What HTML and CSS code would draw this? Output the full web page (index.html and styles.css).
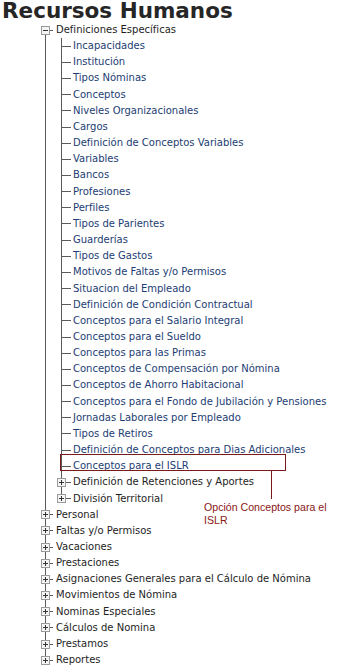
FILE: index.html
```html
<!DOCTYPE html>
<html lang="es">
<head>
<meta charset="utf-8">
<title>Recursos Humanos</title>
<link rel="stylesheet" href="styles.css">
</head>
<body>
<div class="page">
  <h1 class="title">Recursos Humanos</h1>
  <div class="tree">
    <div class="row folder"><span class="conn c1 first"><span class="box minus"></span></span><span class="label">Definiciones Específicas</span></div>

    <div class="row leaf"><span class="ind v"></span><span class="conn c2 mid"></span><span class="label">Incapacidades</span></div>
    <div class="row leaf"><span class="ind v"></span><span class="conn c2 mid"></span><span class="label">Institución</span></div>
    <div class="row leaf"><span class="ind v"></span><span class="conn c2 mid"></span><span class="label">Tipos Nóminas</span></div>
    <div class="row leaf"><span class="ind v"></span><span class="conn c2 mid"></span><span class="label">Conceptos</span></div>
    <div class="row leaf"><span class="ind v"></span><span class="conn c2 mid"></span><span class="label">Niveles Organizacionales</span></div>
    <div class="row leaf"><span class="ind v"></span><span class="conn c2 mid"></span><span class="label">Cargos</span></div>
    <div class="row leaf"><span class="ind v"></span><span class="conn c2 mid"></span><span class="label">Definición de Conceptos Variables</span></div>
    <div class="row leaf"><span class="ind v"></span><span class="conn c2 mid"></span><span class="label">Variables</span></div>
    <div class="row leaf"><span class="ind v"></span><span class="conn c2 mid"></span><span class="label">Bancos</span></div>
    <div class="row leaf"><span class="ind v"></span><span class="conn c2 mid"></span><span class="label">Profesiones</span></div>
    <div class="row leaf"><span class="ind v"></span><span class="conn c2 mid"></span><span class="label">Perfiles</span></div>
    <div class="row leaf"><span class="ind v"></span><span class="conn c2 mid"></span><span class="label">Tipos de Parientes</span></div>
    <div class="row leaf"><span class="ind v"></span><span class="conn c2 mid"></span><span class="label">Guarderías</span></div>
    <div class="row leaf"><span class="ind v"></span><span class="conn c2 mid"></span><span class="label">Tipos de Gastos</span></div>
    <div class="row leaf"><span class="ind v"></span><span class="conn c2 mid"></span><span class="label">Motivos de Faltas y/o Permisos</span></div>
    <div class="row leaf"><span class="ind v"></span><span class="conn c2 mid"></span><span class="label">Situacion del Empleado</span></div>
    <div class="row leaf"><span class="ind v"></span><span class="conn c2 mid"></span><span class="label">Definición de Condición Contractual</span></div>
    <div class="row leaf"><span class="ind v"></span><span class="conn c2 mid"></span><span class="label">Conceptos para el Salario Integral</span></div>
    <div class="row leaf"><span class="ind v"></span><span class="conn c2 mid"></span><span class="label">Conceptos para el Sueldo</span></div>
    <div class="row leaf"><span class="ind v"></span><span class="conn c2 mid"></span><span class="label">Conceptos para las Primas</span></div>
    <div class="row leaf"><span class="ind v"></span><span class="conn c2 mid"></span><span class="label">Conceptos de Compensación por Nómina</span></div>
    <div class="row leaf"><span class="ind v"></span><span class="conn c2 mid"></span><span class="label">Conceptos de Ahorro Habitacional</span></div>
    <div class="row leaf"><span class="ind v"></span><span class="conn c2 mid"></span><span class="label">Conceptos para el Fondo de Jubilación y Pensiones</span></div>
    <div class="row leaf"><span class="ind v"></span><span class="conn c2 mid"></span><span class="label">Jornadas Laborales por Empleado</span></div>
    <div class="row leaf"><span class="ind v"></span><span class="conn c2 mid"></span><span class="label">Tipos de Retiros</span></div>
    <div class="row leaf"><span class="ind v"></span><span class="conn c2 mid"></span><span class="label">Definición de Conceptos para Dias Adicionales</span></div>
    <div class="row leaf"><span class="ind v"></span><span class="conn c2 mid"></span><span class="label">Conceptos para el ISLR</span></div>
    <div class="row folder"><span class="ind v"></span><span class="conn c2 mid"><span class="box plus"></span></span><span class="label">Definición de Retenciones y Aportes</span></div>
    <div class="row folder"><span class="ind v"></span><span class="conn c2 last"><span class="box plus"></span></span><span class="label">División Territorial</span></div>

    <div class="row folder"><span class="conn c1 mid"><span class="box plus"></span></span><span class="label">Personal</span></div>
    <div class="row folder"><span class="conn c1 mid"><span class="box plus"></span></span><span class="label">Faltas y/o Permisos</span></div>
    <div class="row folder"><span class="conn c1 mid"><span class="box plus"></span></span><span class="label">Vacaciones</span></div>
    <div class="row folder"><span class="conn c1 mid"><span class="box plus"></span></span><span class="label">Prestaciones</span></div>
    <div class="row folder"><span class="conn c1 mid"><span class="box plus"></span></span><span class="label">Asignaciones Generales para el Cálculo de Nómina</span></div>
    <div class="row folder"><span class="conn c1 mid"><span class="box plus"></span></span><span class="label">Movimientos de Nómina</span></div>
    <div class="row folder"><span class="conn c1 mid"><span class="box plus"></span></span><span class="label">Nominas Especiales</span></div>
    <div class="row folder"><span class="conn c1 mid"><span class="box plus"></span></span><span class="label">Cálculos de Nomina</span></div>
    <div class="row folder"><span class="conn c1 mid"><span class="box plus"></span></span><span class="label">Prestamos</span></div>
    <div class="row folder"><span class="conn c1 last"><span class="box plus"></span></span><span class="label">Reportes</span></div>
  </div>

  <div class="callout-box"></div>
  <div class="callout-line"></div>
  <div class="callout-text">Opción Conceptos para el<br>ISLR</div>
</div>
</body>
</html>
```

FILE: styles.css
```css
html, body {
  margin: 0;
  padding: 0;
  background: #ffffff;
}

.page {
  position: relative;
  width: 348px;
  height: 668px;
  overflow: hidden;
}

.title {
  margin: 0;
  padding-left: 2px;
  font-family: "DejaVu Sans", Verdana, sans-serif;
  font-weight: bold;
  font-size: 21.5px;
  line-height: 21px;
  color: #262626;
  white-space: nowrap;
}

.tree {
  padding-top: 1px;
  padding-left: 37px;
  font-family: "DejaVu Sans", Verdana, sans-serif;
  font-size: 10px;
}

.row {
  display: flex;
  align-items: stretch;
  height: 16.17px;
  line-height: 16.17px;
  white-space: nowrap;
}

.ind {
  flex: 0 0 16px;
}

.ind.v {
  background: linear-gradient(#5a5a5a, #5a5a5a) 8px 0 / 1px 100% no-repeat;
}

.conn {
  display: flex;
  align-items: center;
  flex: 0 0 16px;
}

.conn.c2 {
  flex-basis: 18px;
}

/* vertical + horizontal connector lines */
.conn.c1.first {
  background:
    linear-gradient(#5a5a5a, #5a5a5a) 13px 50% / 3px 1px no-repeat,
    linear-gradient(#5a5a5a, #5a5a5a) 8px 100% / 1px 50% no-repeat;
}

.conn.c1.mid {
  background:
    linear-gradient(#5a5a5a, #5a5a5a) 13px 50% / 3px 1px no-repeat,
    linear-gradient(#5a5a5a, #5a5a5a) 8px 0 / 1px 100% no-repeat;
}

.conn.c1.last {
  background:
    linear-gradient(#5a5a5a, #5a5a5a) 13px 50% / 3px 1px no-repeat,
    linear-gradient(#5a5a5a, #5a5a5a) 8px 0 / 1px 50% no-repeat;
}

.conn.c2.mid {
  background:
    linear-gradient(#5a5a5a, #5a5a5a) 8px 50% / 10px 1px no-repeat,
    linear-gradient(#5a5a5a, #5a5a5a) 8px 0 / 1px 100% no-repeat;
}

.conn.c2.last {
  background:
    linear-gradient(#5a5a5a, #5a5a5a) 8px 50% / 10px 1px no-repeat,
    linear-gradient(#5a5a5a, #5a5a5a) 8px 0 / 1px 50% no-repeat;
}

.box {
  box-sizing: border-box;
  width: 9px;
  height: 9px;
  margin-left: 4px;
  border: 1px solid #9a9a9a;
  background-color: #f4f4f4;
}

.box.minus {
  background:
    linear-gradient(#333, #333) 1px 3px / 5px 1px no-repeat,
    #f4f4f4;
}

.box.plus {
  background:
    linear-gradient(#333, #333) 1px 3px / 5px 1px no-repeat,
    linear-gradient(#333, #333) 3px 1px / 1px 5px no-repeat,
    #f4f4f4;
}

.label {
  padding-left: 3px;
}

.c2 + .label {
  padding-left: 2px;
}

.leaf .label {
  color: #223d73;
}

.folder .label {
  color: #1e1e1e;
}

/* annotation overlay */
.callout-box {
  position: absolute;
  left: 60px;
  top: 454px;
  width: 226px;
  height: 17px;
  box-sizing: border-box;
  border: 1px solid #7a1a1a;
}

.callout-line {
  position: absolute;
  left: 271px;
  top: 470px;
  width: 1px;
  height: 29px;
  background: #7a1a1a;
}

.callout-text {
  position: absolute;
  left: 204px;
  top: 501px;
  font-family: "Liberation Sans", Arial, sans-serif;
  font-size: 10.6px;
  line-height: 13px;
  color: #8a1616;
  white-space: nowrap;
}
```
